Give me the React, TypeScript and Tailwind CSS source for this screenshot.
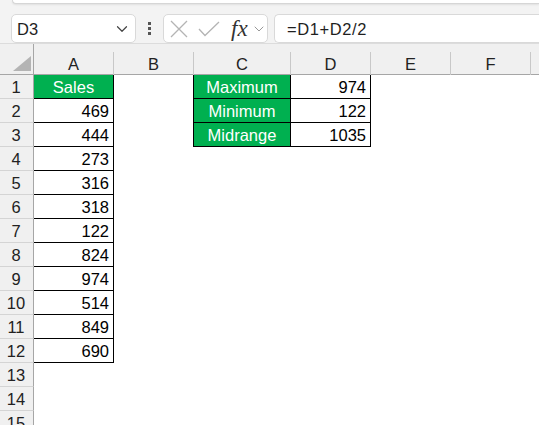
import { ChevronDown } from "lucide-react"

const cols = [
  { name: "A", w: "w-[80px]" },
  { name: "B", w: "w-[80px]" },
  { name: "C", w: "w-[97px]" },
  { name: "D", w: "w-[80px]" },
  { name: "E", w: "w-[80px]" },
  { name: "F", w: "w-[80px]" },
]

const sales = [469, 444, 273, 316, 318, 122, 824, 974, 514, 849, 690]

const stats: Record<number, [string, number]> = {
  1: ["Maximum", 974],
  2: ["Minimum", 122],
  3: ["Midrange", 1035],
}

function Row({ n }: { n: number }) {
  const stat = stats[n]
  const a = n === 1 ? "Sales" : sales[n - 2]
  return (
    <div className="flex h-[24px] text-[16.5px] leading-none">
      <div className="flex w-[34px] shrink-0 items-center justify-center border-r border-b border-r-[#a6a6a6] border-b-[#d4d4d4] bg-[#f0f0f0] pt-[2px] pr-[1px] text-[#222]">
        {n}
      </div>
      {/* A */}
      {n === 1 ? (
        <div className="flex w-[80px] shrink-0 items-center justify-center border-r border-b border-black bg-[#00b050] pt-[1px] text-white">
          Sales
        </div>
      ) : a !== undefined ? (
        <div className="flex w-[80px] shrink-0 items-center justify-end border-r border-b border-black pt-[2px] pr-[4px] text-black">
          {a}
        </div>
      ) : (
        <div className="w-[80px] shrink-0" />
      )}
      {/* B */}
      <div className={`w-[80px] shrink-0 ${stat ? "border-r border-black" : ""}`} />
      {/* C, D */}
      {stat ? (
        <>
          <div className="flex w-[97px] shrink-0 items-center justify-center border-r border-b border-black bg-[#00b050] pt-[2px] text-white">
            {stat[0]}
          </div>
          <div className="flex w-[80px] shrink-0 items-center justify-end border-r border-b border-black pt-[2px] pr-[4px] text-black">
            {stat[1]}
          </div>
        </>
      ) : (
        <>
          <div className="w-[97px] shrink-0" />
          <div className="w-[80px] shrink-0" />
        </>
      )}
    </div>
  )
}

export default function App() {
  return (
    <div className="relative h-[425px] w-[539px] overflow-hidden bg-white font-['Liberation_Sans',Arial,sans-serif]">
      {/* toolbar */}
      <div className="h-[44px] border-b border-[#dcdcdc] bg-[#f3f3f3]">
        <div className="ml-[12px] h-[4px] rounded-bl-[6px] border-b border-l border-[#d6d6d6] bg-white shadow-[0_1px_2px_rgba(0,0,0,0.08)]" />
        <div className="mt-[10px] flex h-[29px] items-stretch">
          <div className="ml-[11px] flex w-[125px] items-center justify-between rounded-[5px] border border-[#d9d9d9] bg-white pl-[5px] pr-[4px]">
            <span className="pt-[1px] text-[16.5px] text-[#1f1f1f]">D3</span>
            <ChevronDown size={18} strokeWidth={1.6} className="text-[#444]" />
          </div>
          <div className="flex w-[27px] flex-col items-center justify-center gap-[2px]">
            <span className="h-[3px] w-[3px] bg-[#555]" />
            <span className="h-[3px] w-[3px] bg-[#555]" />
            <span className="h-[3px] w-[3px] bg-[#555]" />
          </div>
          <div className="flex w-[105px] items-center rounded-[5px] border border-[#d9d9d9] bg-white pl-[6px]">
            <svg width="18" height="18" viewBox="0 0 18 18" className="shrink-0">
              <path d="M1 1 L17 17 M17 1 L1 17" stroke="#b4b4b4" strokeWidth="1.3" fill="none" />
            </svg>
            <svg width="22" height="16" viewBox="0 0 22 16" className="ml-[10px] shrink-0">
              <path d="M1 8 L7 14.5 L21 1" stroke="#b4b4b4" strokeWidth="1.3" fill="none" />
            </svg>
            <span className="ml-[11px] font-['Liberation_Serif',serif] text-[23px] italic leading-none text-[#333]">
              fx
            </span>
            <ChevronDown size={16} strokeWidth={1.3} className="ml-[3px] text-[#888]" />
          </div>
          <div className="ml-[6px] flex flex-1 items-center rounded-l-[5px] border border-r-0 border-[#d9d9d9] bg-white pl-[12px]">
            <span className="pt-[1px] text-[16.5px] tracking-[0.6px] text-[#1f1f1f]">=D1+D2/2</span>
          </div>
        </div>
      </div>

      {/* column headers */}
      <div className="flex h-[31px] border-b border-[#a6a6a6] bg-[#f0f0f0]">
        <div className="flex w-[34px] shrink-0 items-end justify-end border-r border-[#a6a6a6] pb-[3px] pr-[2px]">
          <svg width="18" height="15" viewBox="0 0 18 15">
            <polygon points="18,0 18,15 0,15" fill="#b4b4b4" />
          </svg>
        </div>
        {cols.map((c) => (
          <div key={c.name} className={`${c.w} shrink-0 pt-[8px]`}>
            <div className="flex h-[23px] items-center justify-center border-r border-[#c8c8c8] pt-[2px] text-[16.5px] leading-none text-[#222]">
              {c.name}
            </div>
          </div>
        ))}
      </div>

      {Array.from({ length: 15 }, (_, i) => (
        <Row key={i} n={i + 1} />
      ))}
    </div>
  )
}
